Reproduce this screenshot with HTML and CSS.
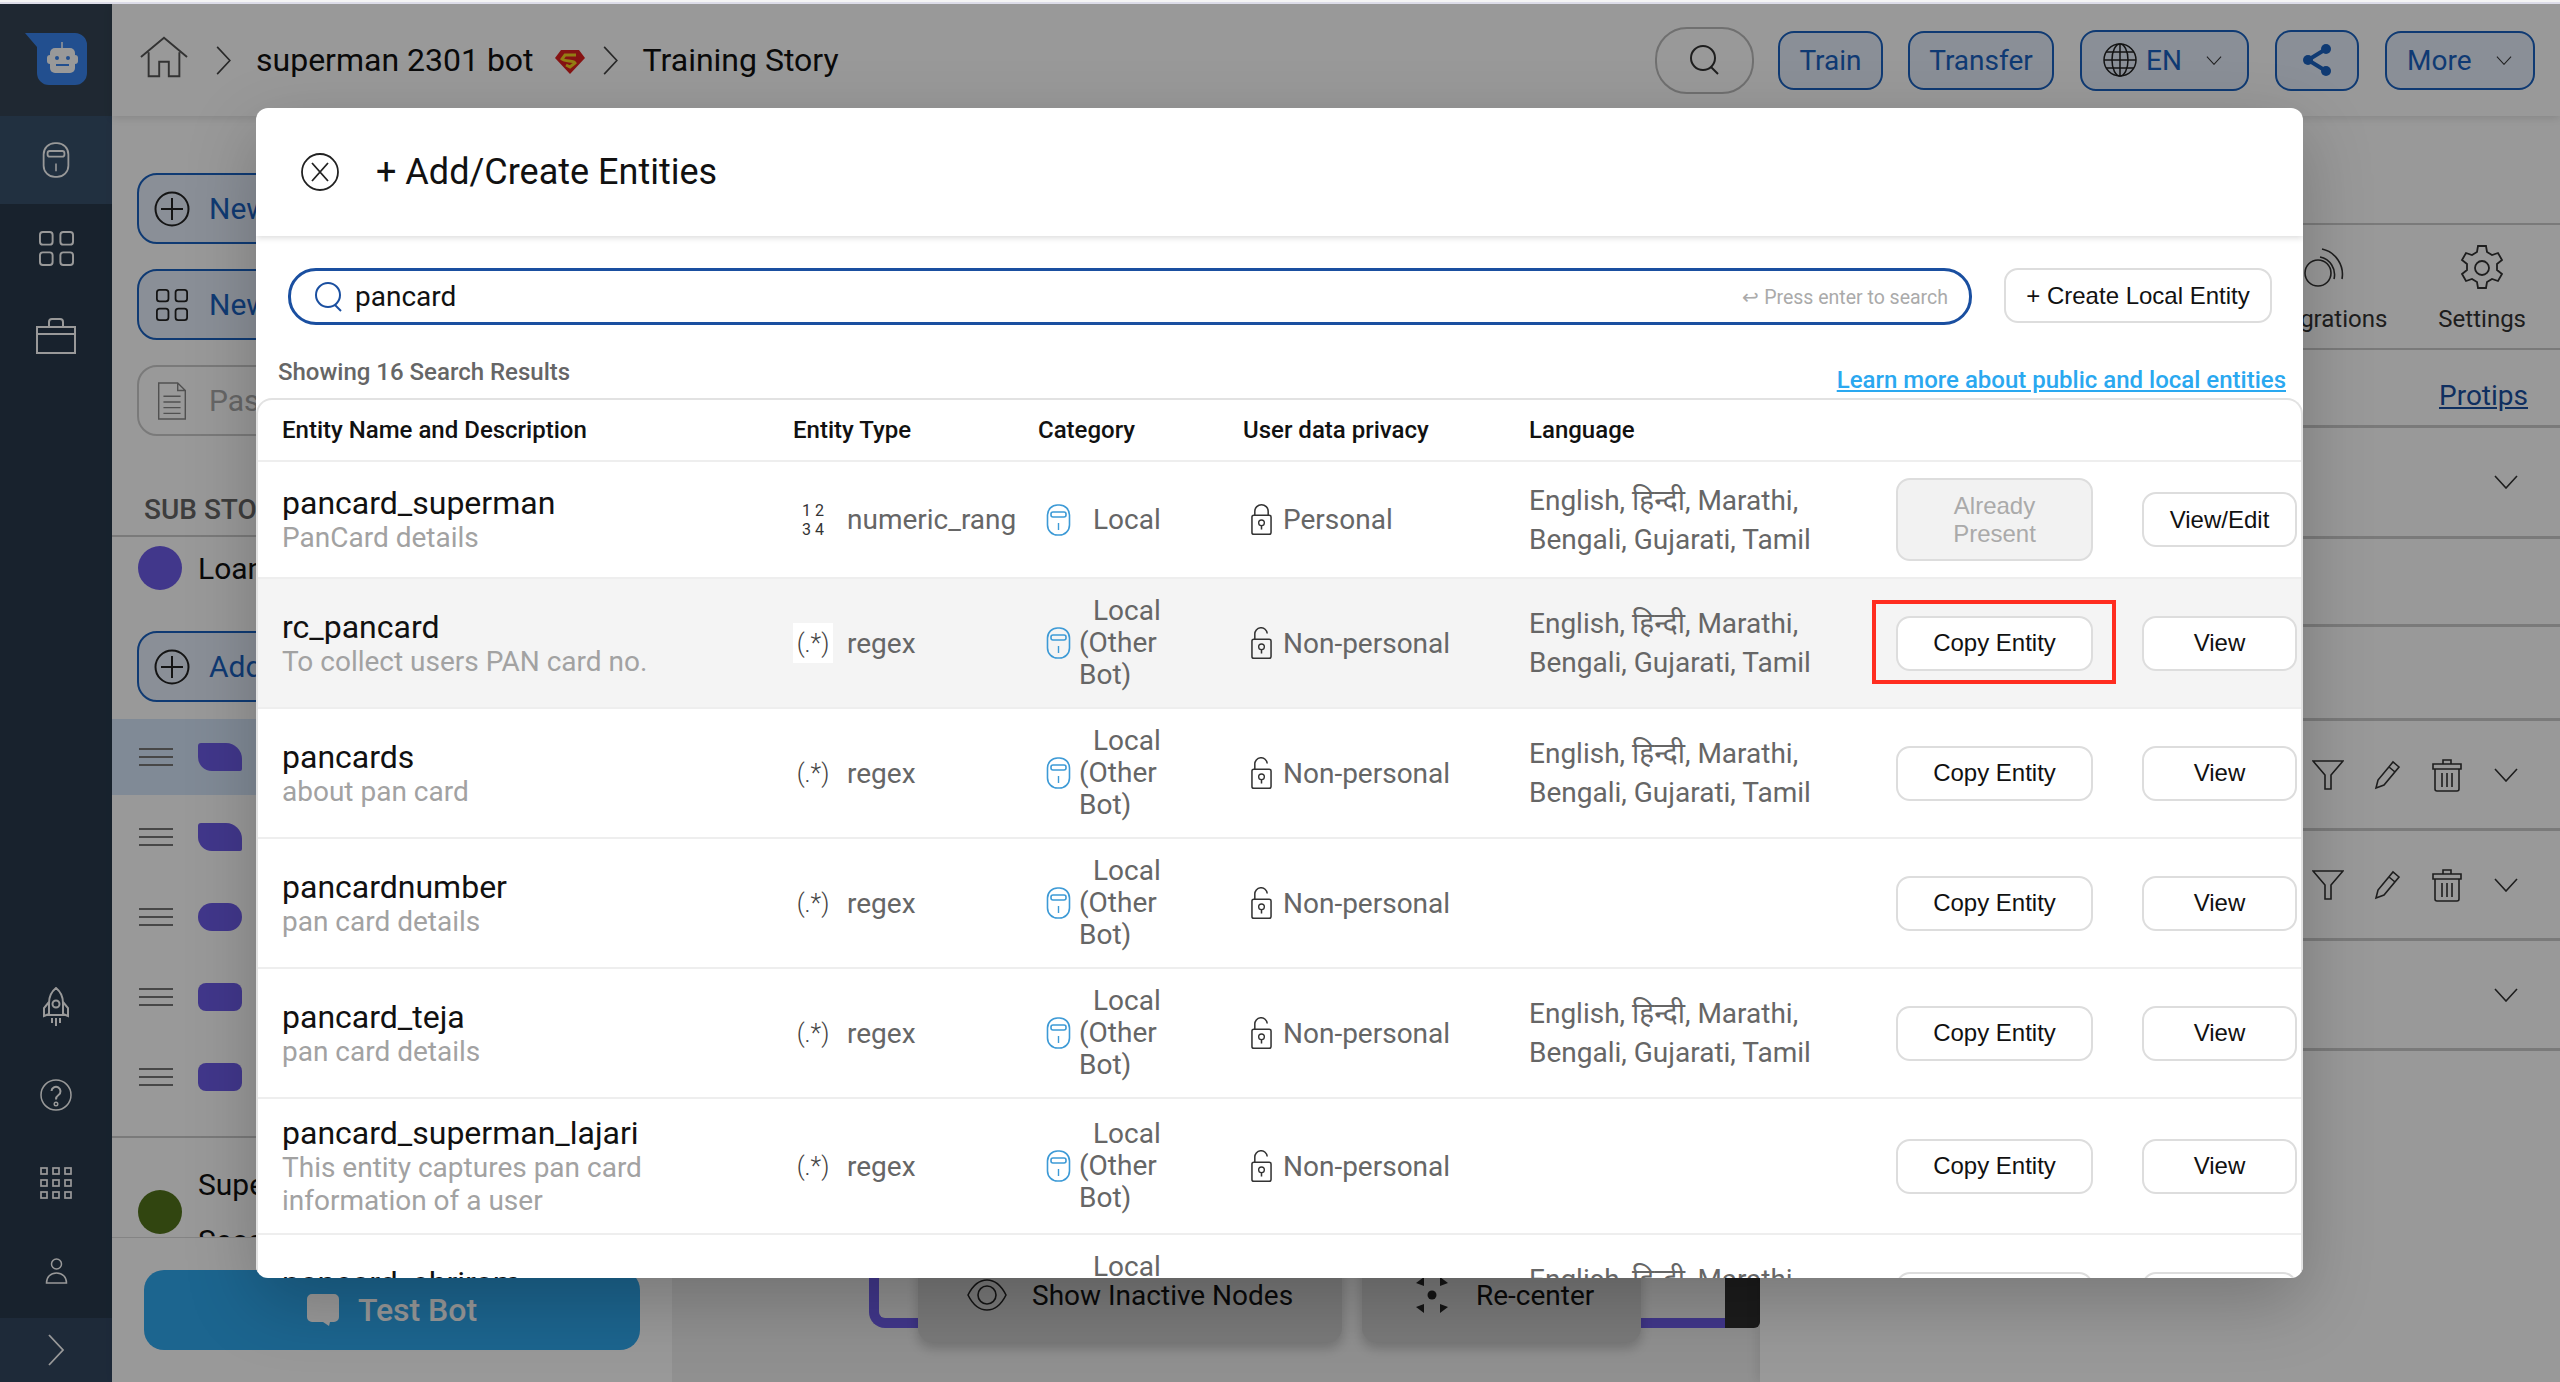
FILE: index.html
```html
<!DOCTYPE html>
<html lang="en">
<head>
<meta charset="utf-8">
<title>Training Story</title>
<link rel="stylesheet" href="styles.css">
</head>
<body>
<svg class="defs" width="0" height="0" aria-hidden="true">
  <symbol id="i-local" viewBox="0 0 24 32"><rect x="1" y="1" width="22" height="30" rx="10" fill="none" stroke="currentColor" stroke-width="1.6"/><rect x="4.5" y="8" width="15" height="5" rx="2" fill="none" stroke="currentColor" stroke-width="1.6"/><path d="M12 19v7" stroke="currentColor" stroke-width="1.4"/></symbol>
  <symbol id="i-lock" viewBox="0 0 22 33"><rect x="1" y="12" width="20" height="20" rx="2" fill="none" stroke="currentColor" stroke-width="1.6"/><path d="M4 12V8a7 7 0 0 1 14 0v4" fill="none" stroke="currentColor" stroke-width="1.6"/><circle cx="11" cy="20" r="3" fill="none" stroke="currentColor" stroke-width="1.4"/><path d="M11 23v4" stroke="currentColor" stroke-width="1.6"/></symbol>
  <symbol id="i-unlock" viewBox="0 0 22 33"><rect x="1" y="12" width="20" height="20" rx="2" fill="none" stroke="currentColor" stroke-width="1.6"/><path d="M4 12V7a6.500 6.500 0 0 1 13-1" fill="none" stroke="currentColor" stroke-width="1.6"/><circle cx="11" cy="20" r="3" fill="none" stroke="currentColor" stroke-width="1.4"/><path d="M11 23v4" stroke="currentColor" stroke-width="1.6"/></symbol>
  <symbol id="i-chev" viewBox="0 0 24 14"><path d="M1 1l11 12L23 1" fill="none" stroke="currentColor" stroke-width="1.6"/></symbol>
  <symbol id="i-right" viewBox="0 0 16 32"><path d="M1 1l14 15L1 31" fill="none" stroke="currentColor" stroke-width="1.8"/></symbol>
  <symbol id="i-plus" viewBox="0 0 36 36"><circle cx="18" cy="18" r="16.500" fill="none" stroke="currentColor" stroke-width="2"/><path d="M18 7v22M7 18h22" stroke="currentColor" stroke-width="2"/></symbol>
  <symbol id="i-grid" viewBox="0 0 36 36"><g fill="none" stroke="currentColor" stroke-width="2"><rect x="1" y="1" width="13" height="13" rx="3"/><rect x="22" y="1" width="13" height="13" rx="3"/><rect x="1" y="22" width="13" height="13" rx="3"/><rect x="22" y="22" width="13" height="13" rx="3"/></g></symbol>
  <symbol id="i-filter" viewBox="0 0 32 30"><path d="M1 1h30L19 15v14h-6V15z" fill="none" stroke="currentColor" stroke-width="1.6"/></symbol>
  <symbol id="i-pencil" viewBox="0 0 28 30"><path d="M2 28l2-8L19 2l6 5L10 25z M15 7l6 5" fill="none" stroke="currentColor" stroke-width="1.6"/></symbol>
  <symbol id="i-trash" viewBox="0 0 30 34"><path d="M1 6h28v5H1zM11 6V2h8v4M3 11v20a2 2 0 0 0 2 2h20a2 2 0 0 0 2-2V11M10 15v14M15 15v14M20 15v14" fill="none" stroke="currentColor" stroke-width="1.6"/></symbol>
</svg>

<div class="strip"></div>
<div class="app">
  <aside class="sidebar">
    <div class="side-logo">
      <svg class="logo" viewBox="0 0 62 52"><path d="M0 0h50a12 12 0 0 1 12 12v28a12 12 0 0 1-12 12H24a12 12 0 0 1-12-12V14z" fill="#3a84ee"/><path d="M37 9v7" stroke="#fff" stroke-width="1.5"/><rect x="25" y="15" width="25" height="25" rx="5" fill="#fff"/><rect x="22" y="22" width="31" height="9" rx="3" fill="#fff"/><circle cx="32" cy="25" r="2" fill="#3a84ee"/><circle cx="43" cy="25" r="2" fill="#3a84ee"/><path d="M31 32h13" stroke="#3a84ee" stroke-width="2"/></svg>
    </div>
    <div class="side-item selected"><svg class="ic-local"><use href="#i-local"/></svg></div>
    <div class="side-item"><svg class="ic-grid"><use href="#i-grid"/></svg></div>
    <div class="side-item">
      <svg class="ic-case" viewBox="0 0 40 36"><path d="M1 9h38v26H1zM1 16h38M13 9V4a3 3 0 0 1 3-3h8a3 3 0 0 1 3 3v5" fill="none" stroke="currentColor" stroke-width="2"/></svg>
    </div>
    <div class="side-space"></div>
    <div class="side-item">
      <svg class="ic-rocket" viewBox="0 0 28 40"><path d="M14 1c5 4 7 9 7 15v12H7V16C7 10 9 5 14 1zM7 15L2 21v8l5-2M21 15l5 6v8l-5-2M10 31v5M14 31v8M18 31v5" fill="none" stroke="currentColor" stroke-width="2"/><circle cx="14" cy="17" r="3.500" fill="none" stroke="currentColor" stroke-width="2"/></svg>
    </div>
    <div class="side-item">
      <svg class="ic-help" viewBox="0 0 32 32"><circle cx="16" cy="16" r="15" fill="none" stroke="currentColor" stroke-width="1.500"/><path d="M11.500 12a4.500 4.500 0 1 1 7 4c-2 1.300-2.500 2.500-2.500 4.500" fill="none" stroke="currentColor" stroke-width="2"/><circle cx="16" cy="25" r="1.800" fill="none" stroke="currentColor" stroke-width="1.400"/></svg>
    </div>
    <div class="side-item">
      <svg class="ic-apps" viewBox="0 0 32 32"><g fill="none" stroke="currentColor" stroke-width="1.700"><rect x="1" y="1" width="6" height="6"/><rect x="13" y="1" width="6" height="6"/><rect x="25" y="1" width="6" height="6"/><rect x="1" y="13" width="6" height="6"/><rect x="13" y="13" width="6" height="6"/><rect x="25" y="13" width="6" height="6"/><rect x="1" y="25" width="6" height="6"/><rect x="13" y="25" width="6" height="6"/><rect x="25" y="25" width="6" height="6"/></g></svg>
    </div>
    <div class="side-item">
      <svg class="ic-user" viewBox="0 0 22 26"><circle cx="11" cy="6" r="5" fill="none" stroke="currentColor" stroke-width="1.500"/><path d="M1 25c0-6 4-10 10-10s10 4 10 10z" fill="none" stroke="currentColor" stroke-width="1.500"/></svg>
    </div>
    <div class="side-expand"><svg class="ic-expand"><use href="#i-right"/></svg></div>
  </aside>

  <div class="main">
    <header class="topbar">
      <svg class="ic-home" viewBox="0 0 50 42"><path d="M1 21L25 1l24 20M9 16v25h11V26h10v15h11V16" fill="none" stroke="#555" stroke-width="2"/></svg>
      <svg class="crumb-chev"><use href="#i-right"/></svg>
      <span class="crumb">superman 2301 bot</span>
      <svg class="ic-super" viewBox="0 0 32 26"><path d="M7 1h18l6 8-15 16L1 9z" fill="#e02020"/><path d="M22 6H11L8 10c3 3 12 1 13 4l-5 4-4-2" fill="none" stroke="#f5d020" stroke-width="3"/></svg>
      <svg class="crumb-chev"><use href="#i-right"/></svg>
      <span class="crumb">Training Story</span>
      <div class="top-actions">
        <div class="top-search"><svg class="ic-search" viewBox="0 0 30 30"><circle cx="13" cy="13" r="12" fill="none" stroke="#333" stroke-width="2"/><path d="M21 22l7 7" stroke="#333" stroke-width="2"/></svg></div>
        <div class="tbtn btn-train">Train</div>
        <div class="tbtn btn-transfer">Transfer</div>
        <div class="tbtn btn-en tall">
          <svg class="ic-globe" viewBox="0 0 34 34"><g fill="none" stroke="#222" stroke-width="1.500"><circle cx="17" cy="17" r="16"/><ellipse cx="17" cy="17" rx="8" ry="16"/><path d="M17 1v32M1 17h32M3 9h28M3 25h28"/></g></svg>
          <span>EN</span><svg class="tb-chev"><use href="#i-chev"/></svg>
        </div>
        <div class="tbtn btn-share tall">
          <svg class="ic-share" viewBox="0 0 32 34"><path d="M25 6L7 17l18 11" fill="none" stroke="#1a62c0" stroke-width="4"/><circle cx="25" cy="6" r="5" fill="#1a62c0"/><circle cx="7" cy="17" r="5" fill="#1a62c0"/><circle cx="25" cy="28" r="5" fill="#1a62c0"/></svg>
        </div>
        <div class="tbtn btn-more"><span>More</span><svg class="tb-chev"><use href="#i-chev"/></svg></div>
      </div>
    </header>

    <div class="workspace">
      <section class="left">
        <div class="left-scroll">
          <div class="act-btn"><svg class="ic-act"><use href="#i-plus"/></svg><span>New Dialog Node</span></div>
          <div class="act-btn"><svg class="ic-act grid"><use href="#i-grid"/></svg><span>New Sub Story</span></div>
          <div class="act-btn muted">
            <svg class="ic-doc" viewBox="0 0 30 40"><path d="M1 1h20l8 8v30H1zM21 1v8h8M6 15h18M6 21h18M6 27h18M6 33h18" fill="none" stroke="#888" stroke-width="1.500"/></svg><span>Paste</span>
          </div>
          <div class="sub-label">SUB STORIES</div>
          <div class="sub-line"></div>
          <div class="loan-row"><span class="dot purple"></span><span class="row-name">Loan Application</span></div>
          <div class="act-btn add"><svg class="ic-act"><use href="#i-plus"/></svg><span>Add Node</span></div>
          <div class="node-row active"><span class="burger"></span><span class="shape leaf"></span></div>
          <div class="node-row"><span class="burger"></span><span class="shape leaf"></span></div>
          <div class="node-row"><span class="burger"></span><span class="shape pill"></span></div>
          <div class="node-row"><span class="burger"></span><span class="shape rounded"></span></div>
          <div class="node-row"><span class="burger"></span><span class="shape rounded"></span></div>
          <div class="sub-line second"></div>
          <div class="super-row"><span class="dot green"></span><span class="row-name stacked">Super Story<br>Second Line</span></div>
        </div>
        <div class="left-foot">
          <div class="test-bot">
            <svg class="ic-chat" viewBox="0 0 32 32"><path d="M5 0h22a5 5 0 0 1 5 5v18a5 5 0 0 1-5 5h-4l-1 4-6-4H5a5 5 0 0 1-5-5V5a5 5 0 0 1 5-5z" fill="#fff"/></svg>
            <span>Test Bot</span>
          </div>
        </div>
      </section>

      <section class="canvas">
        <div class="flow-line"></div>
        <div class="flow-line-right"></div>
        <div class="flow-end"></div>
        <div class="cv-btn cv-inactive">
          <svg class="ic-eye" viewBox="0 0 40 32"><path d="M1 16C6 6 13 1 20 1s14 5 19 15c-5 10-12 15-19 15S6 26 1 16z" fill="none" stroke="#222" stroke-width="1.600"/><circle cx="20" cy="16" r="9" fill="none" stroke="#222" stroke-width="1.600"/></svg>
          <span>Show Inactive Nodes</span>
        </div>
        <div class="cv-btn cv-center">
          <svg class="ic-recenter" viewBox="0 0 40 40"><circle cx="20" cy="20" r="4.500" fill="#222"/><path d="M12 2v9l-8-3zM28 2v9l8-3zM12 38v-9l-8 3zM28 38v-9l8 3z" fill="#222"/></svg>
          <span>Re-center</span>
        </div>
      </section>

      <section class="right">
        <div class="r-blank"></div>
        <div class="r-tabs">
          <div class="r-tab r-int">
            <svg class="ic-int" viewBox="0 0 40 44"><g fill="none" stroke="#333" stroke-width="1.600"><circle cx="14" cy="28" r="13"/><path d="M16 12a18 18 0 0 1 14 22M18 4a26 26 0 0 1 20 30"/></g></svg>
            <span>Integrations</span>
          </div>
          <div class="r-tab">
            <svg class="ic-gear" viewBox="0 0 44 46"><path d="M18 1h8l1 6 5 3 6-2 4 7-5 4v6l5 4-4 7-6-2-5 3-1 6h-8l-1-6-5-3-6 2-4-7 5-4v-6l-5-4 4-7 6 2 5-3z" fill="none" stroke="#333" stroke-width="1.800"/><circle cx="22" cy="23" r="7" fill="none" stroke="#333" stroke-width="1.800"/></svg>
            <span>Settings</span>
          </div>
        </div>
        <div class="r-protips"><span>Protips</span></div>
        <div class="r-row h111"><svg class="r-chev"><use href="#i-chev"/></svg></div>
        <div class="r-row h88"></div>
        <div class="r-row h94"></div>
        <div class="r-row h110">
          <svg class="r-filter"><use href="#i-filter"/></svg><svg class="r-pencil"><use href="#i-pencil"/></svg><svg class="r-trash"><use href="#i-trash"/></svg><svg class="r-chev"><use href="#i-chev"/></svg>
        </div>
        <div class="r-row h110">
          <svg class="r-filter"><use href="#i-filter"/></svg><svg class="r-pencil"><use href="#i-pencil"/></svg><svg class="r-trash"><use href="#i-trash"/></svg><svg class="r-chev"><use href="#i-chev"/></svg>
        </div>
        <div class="r-row h110"><svg class="r-chev"><use href="#i-chev"/></svg></div>
      </section>
    </div>
  </div>

  <div class="overlay"></div>

  <div class="modal">
    <div class="modal-head">
      <svg class="ic-close" viewBox="0 0 38 38"><circle cx="19" cy="19" r="18" fill="none" stroke="#222" stroke-width="1.800"/><path d="M11 10l16 18M27 10L11 28" stroke="#222" stroke-width="1.800"/></svg>
      <h1 class="modal-title">+ Add/Create Entities</h1>
    </div>
    <div class="search-row">
      <div class="searchbox">
        <svg class="ic-msearch" viewBox="0 0 28 30"><circle cx="13" cy="13" r="12" fill="none" stroke="#1a4fa0" stroke-width="2"/><path d="M20 23l6 6" stroke="#1a4fa0" stroke-width="2"/></svg>
        <span class="search-val">pancard</span>
        <span class="search-hint"><span class="enter">↩</span> Press enter to search</span>
      </div>
      <div class="create-btn">+ Create Local Entity</div>
    </div>
    <div class="results-row">
      <span class="results-count">Showing 16 Search Results</span>
      <a class="learn" href="#">Learn more about public and local entities</a>
    </div>
    <div class="table">
      <div class="row head">
        <div>Entity Name and Description</div><div>Entity Type</div><div>Category</div><div>User data privacy</div><div>Language</div>
      </div>

      <div class="row">
        <div class="c-name"><div class="nm">pancard_superman</div><div class="ds">PanCard details</div></div>
        <div class="c-type"><span class="t-num">1 2<br>3 4</span><span>numeric_rang</span></div>
        <div class="c-cat"><svg class="ic-cat"><use href="#i-local"/></svg><div class="cat-text"><span class="cat-first">Local</span></div></div>
        <div class="c-priv"><svg class="ic-lock"><use href="#i-lock"/></svg><span>Personal</span></div>
        <div class="c-lang">English, हिन्दी, Marathi,<br>Bengali, Gujarati, Tamil</div>
        <div><div class="btn btn-copy disabled">Already<br>Present</div></div>
        <div><div class="btn btn-view">View/Edit</div></div>
      </div>

      <div class="row hilite">
        <div class="c-name"><div class="nm">rc_pancard</div><div class="ds">To collect users PAN card no.</div></div>
        <div class="c-type"><span class="t-rx chip">(.*)</span><span>regex</span></div>
        <div class="c-cat"><svg class="ic-cat"><use href="#i-local"/></svg><div class="cat-text"><span class="cat-first">Local</span>(Other<br>Bot)</div></div>
        <div class="c-priv"><svg class="ic-lock"><use href="#i-unlock"/></svg><span>Non-personal</span></div>
        <div class="c-lang">English, हिन्दी, Marathi,<br>Bengali, Gujarati, Tamil</div>
        <div><div class="btn btn-copy">Copy Entity</div></div>
        <div><div class="btn btn-view">View</div></div>
        <div class="redbox"></div>
      </div>

      <div class="row">
        <div class="c-name"><div class="nm">pancards</div><div class="ds">about pan card</div></div>
        <div class="c-type"><span class="t-rx">(.*)</span><span>regex</span></div>
        <div class="c-cat"><svg class="ic-cat"><use href="#i-local"/></svg><div class="cat-text"><span class="cat-first">Local</span>(Other<br>Bot)</div></div>
        <div class="c-priv"><svg class="ic-lock"><use href="#i-unlock"/></svg><span>Non-personal</span></div>
        <div class="c-lang">English, हिन्दी, Marathi,<br>Bengali, Gujarati, Tamil</div>
        <div><div class="btn btn-copy">Copy Entity</div></div>
        <div><div class="btn btn-view">View</div></div>
      </div>

      <div class="row">
        <div class="c-name"><div class="nm">pancardnumber</div><div class="ds">pan card details</div></div>
        <div class="c-type"><span class="t-rx">(.*)</span><span>regex</span></div>
        <div class="c-cat"><svg class="ic-cat"><use href="#i-local"/></svg><div class="cat-text"><span class="cat-first">Local</span>(Other<br>Bot)</div></div>
        <div class="c-priv"><svg class="ic-lock"><use href="#i-unlock"/></svg><span>Non-personal</span></div>
        <div class="c-lang"></div>
        <div><div class="btn btn-copy">Copy Entity</div></div>
        <div><div class="btn btn-view">View</div></div>
      </div>

      <div class="row">
        <div class="c-name"><div class="nm">pancard_teja</div><div class="ds">pan card details</div></div>
        <div class="c-type"><span class="t-rx">(.*)</span><span>regex</span></div>
        <div class="c-cat"><svg class="ic-cat"><use href="#i-local"/></svg><div class="cat-text"><span class="cat-first">Local</span>(Other<br>Bot)</div></div>
        <div class="c-priv"><svg class="ic-lock"><use href="#i-unlock"/></svg><span>Non-personal</span></div>
        <div class="c-lang">English, हिन्दी, Marathi,<br>Bengali, Gujarati, Tamil</div>
        <div><div class="btn btn-copy">Copy Entity</div></div>
        <div><div class="btn btn-view">View</div></div>
      </div>

      <div class="row">
        <div class="c-name"><div class="nm">pancard_superman_lajari</div><div class="ds">This entity captures pan card<br>information of a user</div></div>
        <div class="c-type"><span class="t-rx">(.*)</span><span>regex</span></div>
        <div class="c-cat"><svg class="ic-cat"><use href="#i-local"/></svg><div class="cat-text"><span class="cat-first">Local</span>(Other<br>Bot)</div></div>
        <div class="c-priv"><svg class="ic-lock"><use href="#i-unlock"/></svg><span>Non-personal</span></div>
        <div class="c-lang"></div>
        <div><div class="btn btn-copy">Copy Entity</div></div>
        <div><div class="btn btn-view">View</div></div>
      </div>

      <div class="row">
        <div class="c-name"><div class="nm">pancard_shriram</div><div class="ds">pan card details</div></div>
        <div class="c-type"><span class="t-rx">(.*)</span><span>regex</span></div>
        <div class="c-cat"><svg class="ic-cat"><use href="#i-local"/></svg><div class="cat-text"><span class="cat-first">Local</span>(Other<br>Bot)</div></div>
        <div class="c-priv"><svg class="ic-lock"><use href="#i-unlock"/></svg><span>Non-personal</span></div>
        <div class="c-lang">English, हिन्दी, Marathi,<br>Bengali, Gujarati, Tamil</div>
        <div><div class="btn btn-copy">Copy Entity</div></div>
        <div><div class="btn btn-view">View</div></div>
      </div>
    </div>
  </div>
</div>
</body>
</html>
```
FILE: styles.css
```css
* { box-sizing: border-box; }
html, body { margin: 0; height: 100%; overflow: hidden; }
body { font-family: Roboto, "Noto Sans", sans-serif; background: #fff; color: #222; }
.defs { position: absolute; }

.strip { height: 4px; background: linear-gradient(#f4f4f4 50%, #dcdce8 50%); }
.app { position: relative; display: flex; height: 1378px; overflow: hidden; background: #fff; }
.overlay { position: absolute; inset: 0; z-index: 2; background: rgba(0, 0, 0, .4); }

/* sidebar */
.sidebar { width: 112px; flex: none; display: flex; flex-direction: column; background: #283a4c; color: #fff; }
.side-logo { height: 112px; background: #344454; display: flex; align-items: center; justify-content: center; flex: none; }
.logo { width: 62px; height: 52px; margin: -2px 0 0 0; }
.side-item { height: 88px; flex: none; display: flex; align-items: center; justify-content: center; }
.side-item.selected { background: #38506b; }
.side-space { flex: 1; }
.side-expand { height: 64px; flex: none; margin-top: 3px; background: #324660; display: flex; align-items: center; justify-content: center; }
.ic-local { width: 28px; height: 36px; }
.ic-grid { width: 35px; height: 35px; }
.ic-case { width: 40px; height: 36px; }
.ic-rocket { width: 28px; height: 40px; }
.ic-help { width: 32px; height: 32px; }
.ic-apps { width: 32px; height: 32px; }
.ic-user { width: 23px; height: 26px; }
.ic-expand { width: 18px; height: 32px; }

/* main */
.main { flex: 1; min-width: 0; display: flex; flex-direction: column; }
.topbar { height: 112px; flex: none; display: flex; align-items: center; background: #fff; padding: 0 25px 0 28px; box-shadow: 0 2px 8px rgba(0, 0, 0, .12); position: relative; z-index: 1; }
.ic-home { width: 48px; height: 42px; margin-top: -6px; }
.crumb-chev { width: 15px; height: 29px; margin: 0 25px 0 28px; color: #444; flex: none; }
.crumb { font-size: 32px; color: #111; }
.ic-super { width: 32px; height: 26px; margin-left: 20px; margin-top: 4px; }
.crumb + .ic-super + .crumb-chev { margin-left: 17px; }
.top-actions { margin-left: auto; display: flex; align-items: center; }
.top-search { width: 99px; height: 67px; border: 2px solid #bbb; border-radius: 32px; display: flex; align-items: center; justify-content: center; margin-right: 24px; }
.ic-search { width: 30px; height: 30px; }
.tbtn { height: 59px; border: 2px solid #1a62c0; border-radius: 16px; background: #e6eefc; color: #1a62c0; font-size: 28px; display: flex; align-items: center; justify-content: center; }
.tbtn.tall { height: 61px; }
.btn-train { width: 105px; margin-right: 25px; }
.btn-transfer { width: 146px; margin-right: 26px; }
.btn-en { width: 169px; margin-right: 26px; justify-content: flex-start; padding-left: 21px; }
.btn-share { width: 84px; margin-right: 26px; }
.btn-more { width: 150px; margin: 0; justify-content: flex-start; padding-left: 20px; }
.ic-globe { width: 34px; height: 34px; margin-right: 9px; }
.ic-share { width: 32px; height: 34px; }
.tb-chev { width: 16px; height: 9px; margin-left: 24px; color: #333; }

.workspace { flex: 1; min-height: 0; display: flex; }

/* left panel */
.left { width: 560px; flex: none; display: flex; flex-direction: column; background: #fff; box-shadow: 4px 0 10px rgba(0, 0, 0, .12); position: relative; }
.left-scroll { height: 1121px; flex: none; overflow: hidden; padding-top: 57px; }
.act-btn { height: 71px; width: 500px; margin: 0 0 25px 25px; border: 2px solid #1a62c0; border-radius: 20px; background: #e6eefc; display: flex; align-items: center; padding-left: 15px; color: #1a62c0; font-size: 30px; }
.act-btn span { margin-left: 19px; }
.act-btn.muted { border-color: #ccc; background: #fff; color: #aaa; }
.act-btn.add { margin: 41px 0 17px 25px; }
.ic-act { width: 36px; height: 36px; color: #222; flex: none; }
.ic-act.grid { width: 32px; height: 32px; margin: 0 2px; }
.ic-doc { width: 30px; height: 38px; margin-left: 3px; margin-right: 3px; flex: none; }
.sub-label { margin: 59px 0 0 32px; font-size: 28px; font-weight: 500; color: #666; line-height: 30px; height: 30px; }
.sub-line { height: 2px; background: #ccc; margin-top: 10px; }
.sub-line.second { margin-top: 19px; }
.loan-row { display: flex; align-items: center; margin: 9px 0 0 26px; height: 44px; }
.dot { width: 44px; height: 44px; border-radius: 50%; flex: none; }
.dot.purple { background: #6d5ce8; }
.dot.green { background: #53731c; }
.row-name { margin-left: 16px; font-size: 30px; color: #111; white-space: nowrap; }
.row-name.stacked { line-height: 56px; margin-top: 2px; }
.node-row { height: 80px; display: flex; align-items: center; padding-left: 27px; }
.node-row.active { background: #d6e6fa; height: 76px; margin: 0 0 2px 0; }
.burger { width: 34px; height: 18px; border-top: 2px solid #777; border-bottom: 2px solid #777; position: relative; flex: none; }
.burger::after { content: ""; position: absolute; left: 0; right: 0; top: 6px; height: 2px; background: #777; }
.shape { width: 44px; height: 28px; margin-left: 25px; background: #6d5ce8; flex: none; }
.shape.leaf { border-radius: 3px 16px 2px 14px; }
.shape.pill { border-radius: 14px; }
.shape.rounded { border-radius: 8px; }
.super-row { display: flex; align-items: center; margin: 14px 0 0 26px; height: 120px; }
.left-foot { flex: 1; padding: 32px 0 0 32px; background: #fff; border-top: 1px solid #ddd; }
.test-bot { width: 496px; height: 80px; border-radius: 20px; background: #30a8ef; display: flex; align-items: center; justify-content: center; color: #fff; font-size: 32px; font-weight: 500; gap: 19px; }
.ic-chat { width: 32px; height: 32px; }

/* canvas */
.canvas { flex: 1; position: relative; background: #f0f0f0; overflow: hidden; }
.flow-line { position: absolute; left: 197px; width: 60px; bottom: 54px; height: 60px; border-left: 10px solid #6d5ce8; border-bottom: 10px solid #6d5ce8; border-bottom-left-radius: 16px; }
.flow-line-right { position: absolute; left: 969px; width: 84px; bottom: 54px; height: 10px; background: #6d5ce8; }
.flow-end { position: absolute; left: 1053px; width: 35px; bottom: 54px; height: 60px; background: #2f2f2f; border-bottom-right-radius: 6px; }
.cv-btn { position: absolute; bottom: 40px; height: 94px; background: #cbcbcb; border-radius: 0 0 14px 14px; box-shadow: 0 6px 12px rgba(0, 0, 0, .2); display: flex; align-items: center; font-size: 28px; color: #111; }
.cv-inactive { left: 246px; width: 424px; padding-left: 49px; }
.cv-center { left: 690px; width: 279px; padding-left: 50px; }
.ic-eye { width: 40px; height: 32px; margin-right: 25px; flex: none; }
.ic-recenter { width: 40px; height: 40px; margin-right: 24px; flex: none; }

/* right panel */
.right { width: 800px; flex: none; background: #fff; box-shadow: -4px 0 10px rgba(0, 0, 0, .08); display: flex; flex-direction: column; position: relative; }
.r-blank { height: 109px; flex: none; border-bottom: 2px solid #ccc; }
.r-tabs { height: 125px; flex: none; border-bottom: 2px solid #ccc; display: flex; justify-content: flex-end; padding-right: 34px; gap: 51px; }
.r-tab { display: flex; flex-direction: column; align-items: center; font-size: 24px; color: #333; padding-top: 20px; }
.ic-gear { width: 44px; height: 46px; margin-bottom: 14px; }
.ic-int { width: 40px; height: 44px; margin-bottom: 16px; }
.r-protips { height: 78px; flex: none; border-bottom: 3px solid #ccc; display: flex; justify-content: flex-end; align-items: center; padding: 16px 32px 0 0; font-size: 28px; color: #1a4fa0; text-decoration: underline; }
.r-row { flex: none; border-bottom: 3px solid #ccc; display: flex; justify-content: flex-end; align-items: center; padding-right: 42px; }
.h111 { height: 111px; }
.h88 { height: 88px; }
.h94 { height: 94px; }
.h110 { height: 110px; }
.r-chev { width: 24px; height: 14px; color: #333; }
.r-filter { width: 32px; height: 30px; margin-right: 30px; color: #333; }
.r-pencil { width: 28px; height: 30px; margin-right: 30px; color: #333; }
.r-trash { width: 30px; height: 34px; margin-right: 32px; color: #333; }

/* modal */
.modal { position: absolute; z-index: 3; left: 256px; top: 104px; width: 2047px; height: 1170px; background: #fff; border-radius: 12px; overflow: hidden; display: flex; flex-direction: column; box-shadow: 0 24px 70px rgba(0, 0, 0, .22); }
.modal-head { height: 128px; flex: none; display: flex; align-items: center; padding-left: 45px; box-shadow: 0 2px 6px rgba(0, 0, 0, .14); }
.ic-close { width: 38px; height: 38px; flex: none; }
.modal-title { margin: 0 0 0 37px; font-size: 36px; font-weight: 400; color: #111; }
.search-row { display: flex; margin-top: 32px; padding-left: 32px; gap: 32px; flex: none; }
.searchbox { width: 1684px; height: 57px; border: 3px solid #1a4fa0; border-radius: 28px; display: flex; align-items: center; padding: 0 21px 0 24px; }
.ic-msearch { width: 28px; height: 30px; flex: none; }
.search-val { margin-left: 12px; font-size: 28px; color: #111; }
.search-hint { margin-left: auto; font-size: 19.5px; color: #aaa; }
.enter { font-size: 20px; }
.create-btn { width: 268px; height: 55px; border: 2px solid #ddd; border-radius: 14px; display: flex; align-items: center; justify-content: center; font-family: "Liberation Sans", Arial, sans-serif; font-size: 24px; color: #111; }
.results-row { display: flex; justify-content: space-between; flex: none; height: 73px; padding: 0 17px 0 22px; }
.results-count { font-size: 24px; font-weight: 500; color: #666; margin-top: 32px; line-height: 30px; }
.learn { font-size: 24px; font-weight: 500; color: #2aa8f0; margin-top: 40px; line-height: 30px; height: 31px; }

.table { flex: 1; min-height: 0; border: 2px solid #e2e2e2; border-bottom: 0; border-radius: 16px 16px 0 0; overflow: hidden; }
.row { display: grid; grid-template-columns: 511px 245px 205px 286px 367px 246px 155px; align-items: center; padding: 16px 0 16px 24px; border-bottom: 2px solid #eee; font-size: 28px; color: #666; position: relative; }
.row.head { padding: 0 0 0 24px; height: 62px; font-size: 24px; font-weight: 500; color: #111; }
.row.hilite { background: #f4f4f4; }
.nm { font-size: 32px; line-height: 36px; color: #111; }
.ds { font-size: 28px; line-height: 33px; color: #a2a2a2; }
.c-type { display: flex; align-items: center; white-space: nowrap; }
.t-num { width: 40px; margin-right: 14px; font-size: 16px; line-height: 19px; color: #333; text-align: center; }
.t-rx { width: 40px; height: 40px; margin-right: 14px; font-size: 25px; font-weight: 300; color: #444; display: flex; align-items: center; justify-content: center; }
.t-rx.chip { background: #fff; }
.c-cat { display: flex; align-items: center; padding-left: 8px; }
.ic-cat { width: 25px; height: 32px; color: #3d9ad6; flex: none; margin-right: 8px; }
.cat-text { line-height: 32px; }
.cat-first { display: block; padding-left: 14px; }
.c-priv { display: flex; align-items: center; padding-left: 8px; }
.ic-lock { width: 21px; height: 33px; margin-right: 11px; color: #333; flex: none; }
.c-lang { line-height: 39px; font-family: Roboto, "Noto Sans", "DejaVu Sans", sans-serif; }
.btn { display: flex; align-items: center; justify-content: center; text-align: center; border: 2px solid #ddd; border-radius: 14px; background: #fff; font-family: "Liberation Sans", Arial, sans-serif; font-size: 24px; color: #111; height: 55px; }
.btn-copy { width: 197px; }
.btn-view { width: 155px; }
.btn.disabled { height: 83px; background: #f2f2f2; color: #aaa; line-height: 28px; }
.redbox { position: absolute; left: 1614px; top: 21px; width: 244px; height: 84px; border: 4px solid #ff2d20; pointer-events: none; }
```
